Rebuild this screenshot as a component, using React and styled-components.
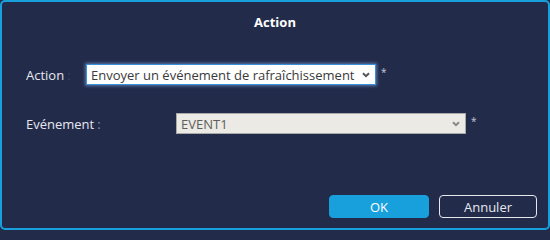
import React from "react";
import styled, { createGlobalStyle } from "styled-components";

const palette = {
  background: "#232b4b",
  accent: "#17a0dc",
  text: "#e6e8ee",
  muted: "#8c92aa",
  field: "#ffffff",
  disabled: "#ebeae4",
};

const GlobalStyle = createGlobalStyle`
  html, body {
    margin: 0;
    padding: 0;
    background: ${palette.background};
  }
  body {
    font-family: "Open Sans", "Liberation Sans", sans-serif;
    font-size: 13px;
  }
`;

const Dialog = styled.div`
  width: 550px;
  height: 230px;
  box-sizing: border-box;
  border: 2px solid ${palette.accent};
  border-radius: 5px;
  background: ${palette.background};
  display: flex;
  flex-direction: column;
`;

const Header = styled.div`
  height: 40px;
  display: flex;
  align-items: center;
  justify-content: center;
  color: #ffffff;
  font-weight: 700;
  font-size: 13px;
`;

const Body = styled.div`
  padding: 22px 0 0 24px;
  display: flex;
  flex-direction: column;
  gap: 28px;
`;

const Row = styled.div`
  display: flex;
  align-items: center;
  height: 21px;
`;

const Label = styled.label`
  width: ${(p) => p.$width}px;
  flex-shrink: 0;
  color: ${palette.text};
  font-size: 13px;
`;

const Colon = styled.span`
  color: ${(p) => (p.$faint ? "#3a4366" : palette.muted)};
  margin-left: 3px;
`;

const SelectWrap = styled.span`
  position: relative;
  display: inline-flex;
  width: 290px;
  height: 21px;
`;

const Select = styled.select`
  appearance: none;
  width: 100%;
  height: 100%;
  box-sizing: border-box;
  margin: 0;
  padding: 0 20px 0 4px;
  font-family: "Open Sans", "Liberation Sans", sans-serif;
  font-size: 13px;
  border-radius: 0;
  outline: none;
  color: ${(p) => (p.$locked ? "#5e5e5e" : "#3a3a3a")};
  background: ${(p) => (p.$locked ? palette.disabled : palette.field)};
  border: 1px solid ${(p) => (p.$locked ? "#a9a9a9" : "#3b8fd8")};
  box-shadow: ${(p) => (p.$locked ? "none" : "0 0 3px 1px rgba(120, 170, 230, 0.6)")};
`;

const Chevron = styled.svg`
  position: absolute;
  right: 6px;
  top: 8px;
  pointer-events: none;
`;

const Required = styled.span`
  align-self: flex-start;
  margin: 3px 0 0 5px;
  color: #c9ccd8;
  font-size: 10px;
  line-height: 10px;
`;

const Footer = styled.div`
  margin-top: auto;
  display: flex;
  justify-content: flex-end;
  gap: 10px;
  padding: 0 11px 10px 0;
`;

const Button = styled.button`
  width: ${(p) => (p.$primary ? 100 : 98)}px;
  height: 23px;
  box-sizing: border-box;
  border-radius: 4px;
  font-family: "Open Sans", "Liberation Sans", sans-serif;
  font-size: 13px;
  padding: 0;
  color: ${(p) => (p.$primary ? "#ffffff" : "#e6e8ee")};
  background: ${(p) => (p.$primary ? palette.accent : "transparent")};
  border: 1px solid ${(p) => (p.$primary ? palette.accent : "#e6e8ee")};
`;

const Field = ({ value, locked }) => (
  <SelectWrap>
    <Select $locked={locked} aria-disabled={locked} defaultValue={value}>
      <option>{value}</option>
    </Select>
    <Chevron width="8" height="6" viewBox="0 0 8 6">
      <path
        d="M1 1.2 L4 4.2 L7 1.2"
        fill="none"
        stroke={locked ? "#888888" : "#555555"}
        strokeWidth="2"
      />
    </Chevron>
  </SelectWrap>
);

export default function App() {
  return (
    <>
      <GlobalStyle />
      <Dialog>
        <Header>Action</Header>
        <Body>
          <Row>
            <Label $width={60}>
              Action<Colon $faint>:</Colon>
            </Label>
            <Field value="Envoyer un événement de rafraîchissement" />
            <Required>*</Required>
          </Row>
          <Row>
            <Label $width={150}>
              Evénement<Colon>:</Colon>
            </Label>
            <Field value="EVENT1" locked />
            <Required>*</Required>
          </Row>
        </Body>
        <Footer>
          <Button $primary>OK</Button>
          <Button>Annuler</Button>
        </Footer>
      </Dialog>
    </>
  );
}
